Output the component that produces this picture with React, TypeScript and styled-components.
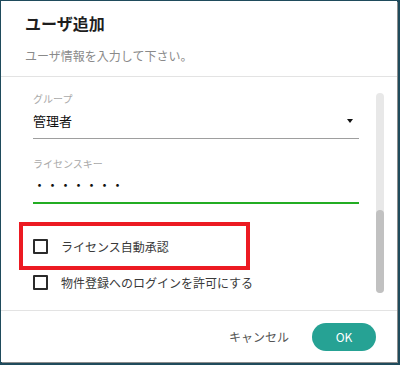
import React from "react";
import styled, { createGlobalStyle } from "styled-components";

const Global = createGlobalStyle`
  html, body { margin: 0; padding: 0; background: #1f4b5c; }
  body { font-family: "Noto Sans CJK JP", "Noto Sans", sans-serif; }
  * { box-sizing: border-box; }
`;

const Page = styled.div`
  width: 400px;
  height: 365px;
  padding: 1px 0 0 1px;
  background: #1f4b5c;
`;

const Dialog = styled.div`
  width: 396px;
  height: 361px;
  background: #fff;
  box-shadow: 1px 1px 0 #8d8d8d;
  display: flex;
  flex-direction: column;
`;

const Header = styled.div`
  padding: 10px 24px 11px 24px;
  display: flex;
  flex-direction: column;
  gap: 12px;
  border-bottom: 1px solid #e3e3e3;
`;

const Title = styled.h1`
  margin: 0;
  font-size: 16px;
  line-height: 24px;
  font-weight: 700;
  color: #1e1e1e;
`;

const Subtitle = styled.p`
  margin: 0;
  font-size: 12px;
  line-height: 18px;
  color: #8a8a8a;
`;

const Body = styled.div`
  flex: 1;
  display: flex;
  border-bottom: 1px solid #e3e3e3;
`;

const Form = styled.div`
  width: 358px;
  padding: 15px 0 0 32px;
  display: flex;
  flex-direction: column;
`;

const Field = styled.div<{ $gap?: number }>`
  display: flex;
  flex-direction: column;
  margin-top: ${(p) => p.$gap ?? 0}px;
`;

const Label = styled.label`
  font-size: 10px;
  line-height: 14px;
  color: #a9a9a9;
`;

const SelectBox = styled.div`
  height: 33px;
  display: flex;
  align-items: center;
  justify-content: space-between;
  padding: 0 6px 3px 0;
  border-bottom: 1px solid #9e9e9e;
  font-size: 13px;
  color: #111;
`;

const Caret = styled.span`
  width: 0;
  height: 0;
  border-left: 3.5px solid transparent;
  border-right: 3.5px solid transparent;
  border-top: 4px solid #111;
`;

const PasswordBox = styled.div`
  height: 33px;
  display: flex;
  align-items: center;
  border-bottom: 2px solid #23ad23;
  font-size: 13px;
  color: #111;
  padding-bottom: 4px;
`;

const Highlight = styled.div`
  margin: 18px 0 0 -14px;
  width: 231px;
  height: 48px;
  border: 4px solid #ec1a22;
  padding-left: 10px;
  display: flex;
  align-items: center;
`;

const CheckRow = styled.label`
  height: 25px;
  display: flex;
  align-items: center;
  gap: 13px;
  font-size: 12px;
  color: #3a3a3a;
`;

const Box = styled.span`
  width: 15px;
  height: 15px;
  border: 2px solid #2b2b2b;
  border-radius: 1px;
  flex: none;
`;

const ScrollTrack = styled.div`
  margin: 16px 0 0 17px;
  width: 8px;
  height: 200px;
  border-radius: 4px;
  background: #e8e8e8;
  display: flex;
  flex-direction: column;
  justify-content: flex-end;
`;

const Thumb = styled.div`
  height: 83px;
  border-radius: 4px;
  background: #c1c1c1;
`;

const Footer = styled.div`
  flex: none;
  height: 51px;
  display: flex;
  align-items: center;
  justify-content: flex-end;
  gap: 23px;
  padding-right: 21px;
`;

const TextButton = styled.button`
  border: none;
  background: none;
  padding: 0;
  font-family: inherit;
  font-size: 12px;
  color: #555;
`;

const PrimaryButton = styled.button`
  border: none;
  width: 64px;
  height: 28px;
  border-radius: 14px;
  background: #26a294;
  color: #fff;
  font-family: inherit;
  font-size: 12px;
`;

export default function App() {
  return (
    <Page>
      <Global />
      <Dialog>
        <Header>
          <Title>ユーザ追加</Title>
          <Subtitle>ユーザ情報を入力して下さい。</Subtitle>
        </Header>
        <Body>
          <Form>
            <Field>
              <Label>グループ</Label>
              <SelectBox>
                <span>管理者</span>
                <Caret />
              </SelectBox>
            </Field>
            <Field $gap={18}>
              <Label>ライセンスキー</Label>
              <PasswordBox>・・・・・・・</PasswordBox>
            </Field>
            <Highlight>
              <CheckRow>
                <Box />
                ライセンス自動承認
              </CheckRow>
            </Highlight>
            <CheckRow>
              <Box />
              物件登録へのログインを許可にする
            </CheckRow>
          </Form>
          <ScrollTrack>
            <Thumb />
          </ScrollTrack>
        </Body>
        <Footer>
          <TextButton>キャンセル</TextButton>
          <PrimaryButton>OK</PrimaryButton>
        </Footer>
      </Dialog>
    </Page>
  );
}
